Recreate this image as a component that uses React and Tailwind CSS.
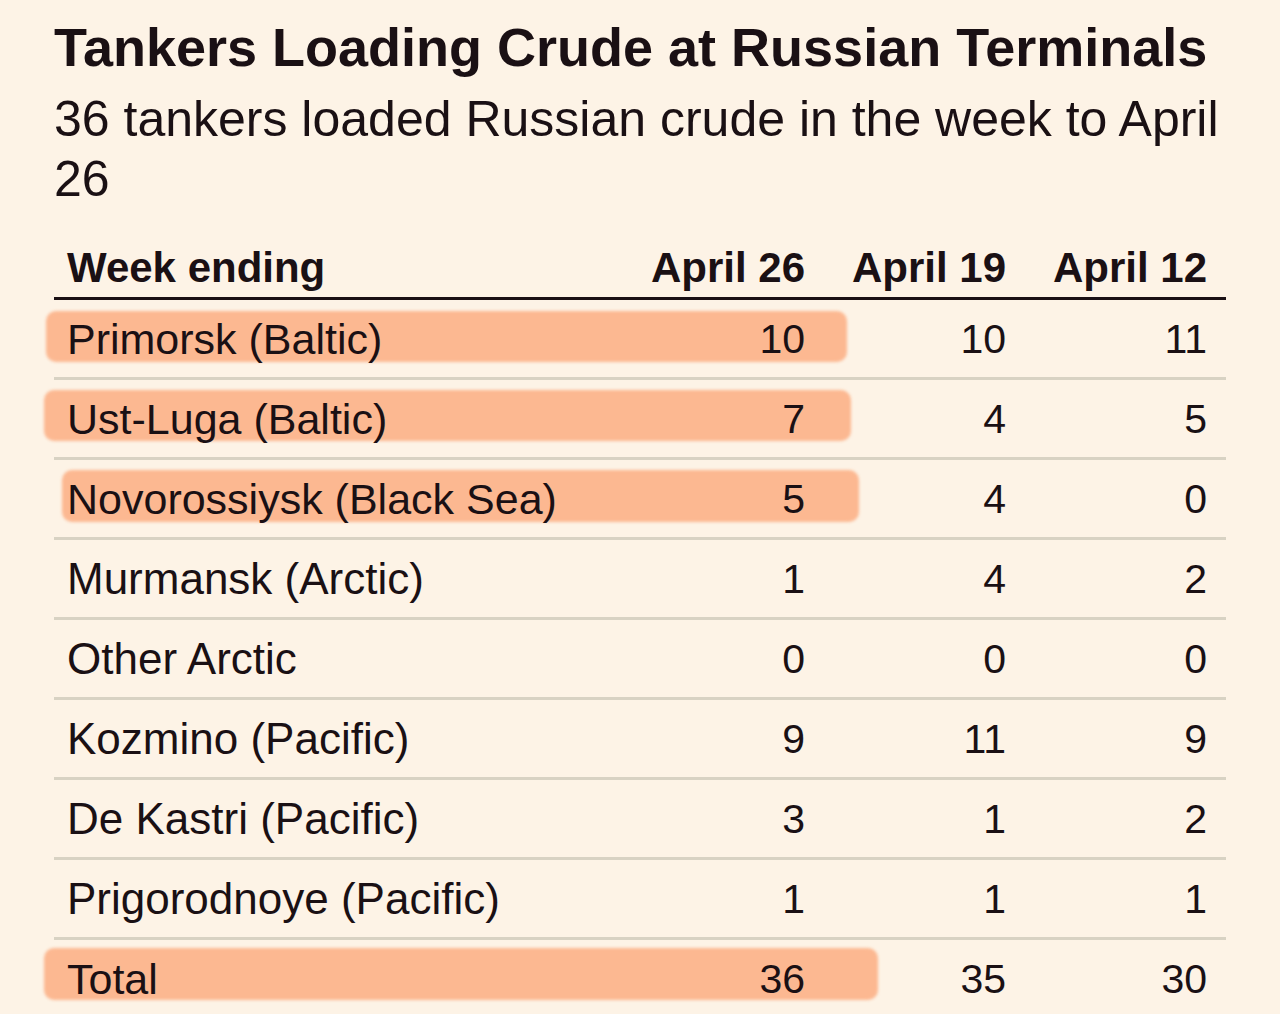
const weeks = ['April 26', 'April 19', 'April 12']

const rows = [
  { name: 'Primorsk (Baltic)', values: [10, 10, 11], mark: 'top-[11px] left-[-8px] w-[801px] h-[51px]' },
  { name: 'Ust-Luga (Baltic)', values: [7, 4, 5], mark: 'top-[10px] left-[-10px] w-[807px] h-[51px]' },
  { name: 'Novorossiysk (Black Sea)', values: [5, 4, 0], mark: 'top-[10px] left-[8px] w-[797px] h-[52px]' },
  { name: 'Murmansk (Arctic)', values: [1, 4, 2] },
  { name: 'Other Arctic', values: [0, 0, 0] },
  { name: 'Kozmino (Pacific)', values: [9, 11, 9] },
  { name: 'De Kastri (Pacific)', values: [3, 1, 2] },
  { name: 'Prigorodnoye (Pacific)', values: [1, 1, 1] },
  { name: 'Total', values: [36, 35, 30], mark: 'top-[8px] left-[-10px] w-[834px] h-[52px]', last: true }
]

function Row({ row }) {
  return (
    <div
      className={`relative grid grid-cols-[1fr_201px_201px_201px] items-center h-[80px] pr-[19px] leading-[48px] ${
        row.last ? 'pb-[3px]' : 'border-b-[3px] border-[#d8d2c3]'
      }`}
    >
      {row.mark && (
        <span className={`absolute ${row.mark} rounded-[10px] bg-[#fcb891] blur-[1.5px]`} />
      )}
      <span className={`relative pl-[13px] whitespace-nowrap ${row.mark ? 'text-[43px]' : 'text-[44px]'}`}>
        {row.name}
      </span>
      {row.values.map((v, i) => (
        <span key={i} className="relative text-right text-[41px]">{v}</span>
      ))}
    </div>
  )
}

export default function App() {
  return (
    <div className="min-h-screen bg-[#fdf3e6] text-[#1a1014] font-['Liberation_Sans',Arial,sans-serif]">
      <div className="pl-[54px] pr-[54px] pt-[17px]">
        <h1 className="text-[54px] leading-[60px] font-bold whitespace-nowrap">
          Tankers Loading Crude at Russian Terminals
        </h1>
        <p className="mt-[12px] text-[50px] leading-[60px]">
          36 tankers loaded Russian crude in the week to April 26
        </p>

        <div className="mt-[35px]">
          <div className="grid grid-cols-[1fr_201px_201px_201px] pr-[19px] pb-[5px] border-b-[3px] border-[#1a1014] text-[42px] leading-[48px] font-bold">
            <span className="pl-[13px]">Week ending</span>
            {weeks.map(w => (
              <span key={w} className="text-right whitespace-nowrap">{w}</span>
            ))}
          </div>
          {rows.map(row => (
            <Row key={row.name} row={row} />
          ))}
        </div>
      </div>
    </div>
  )
}
